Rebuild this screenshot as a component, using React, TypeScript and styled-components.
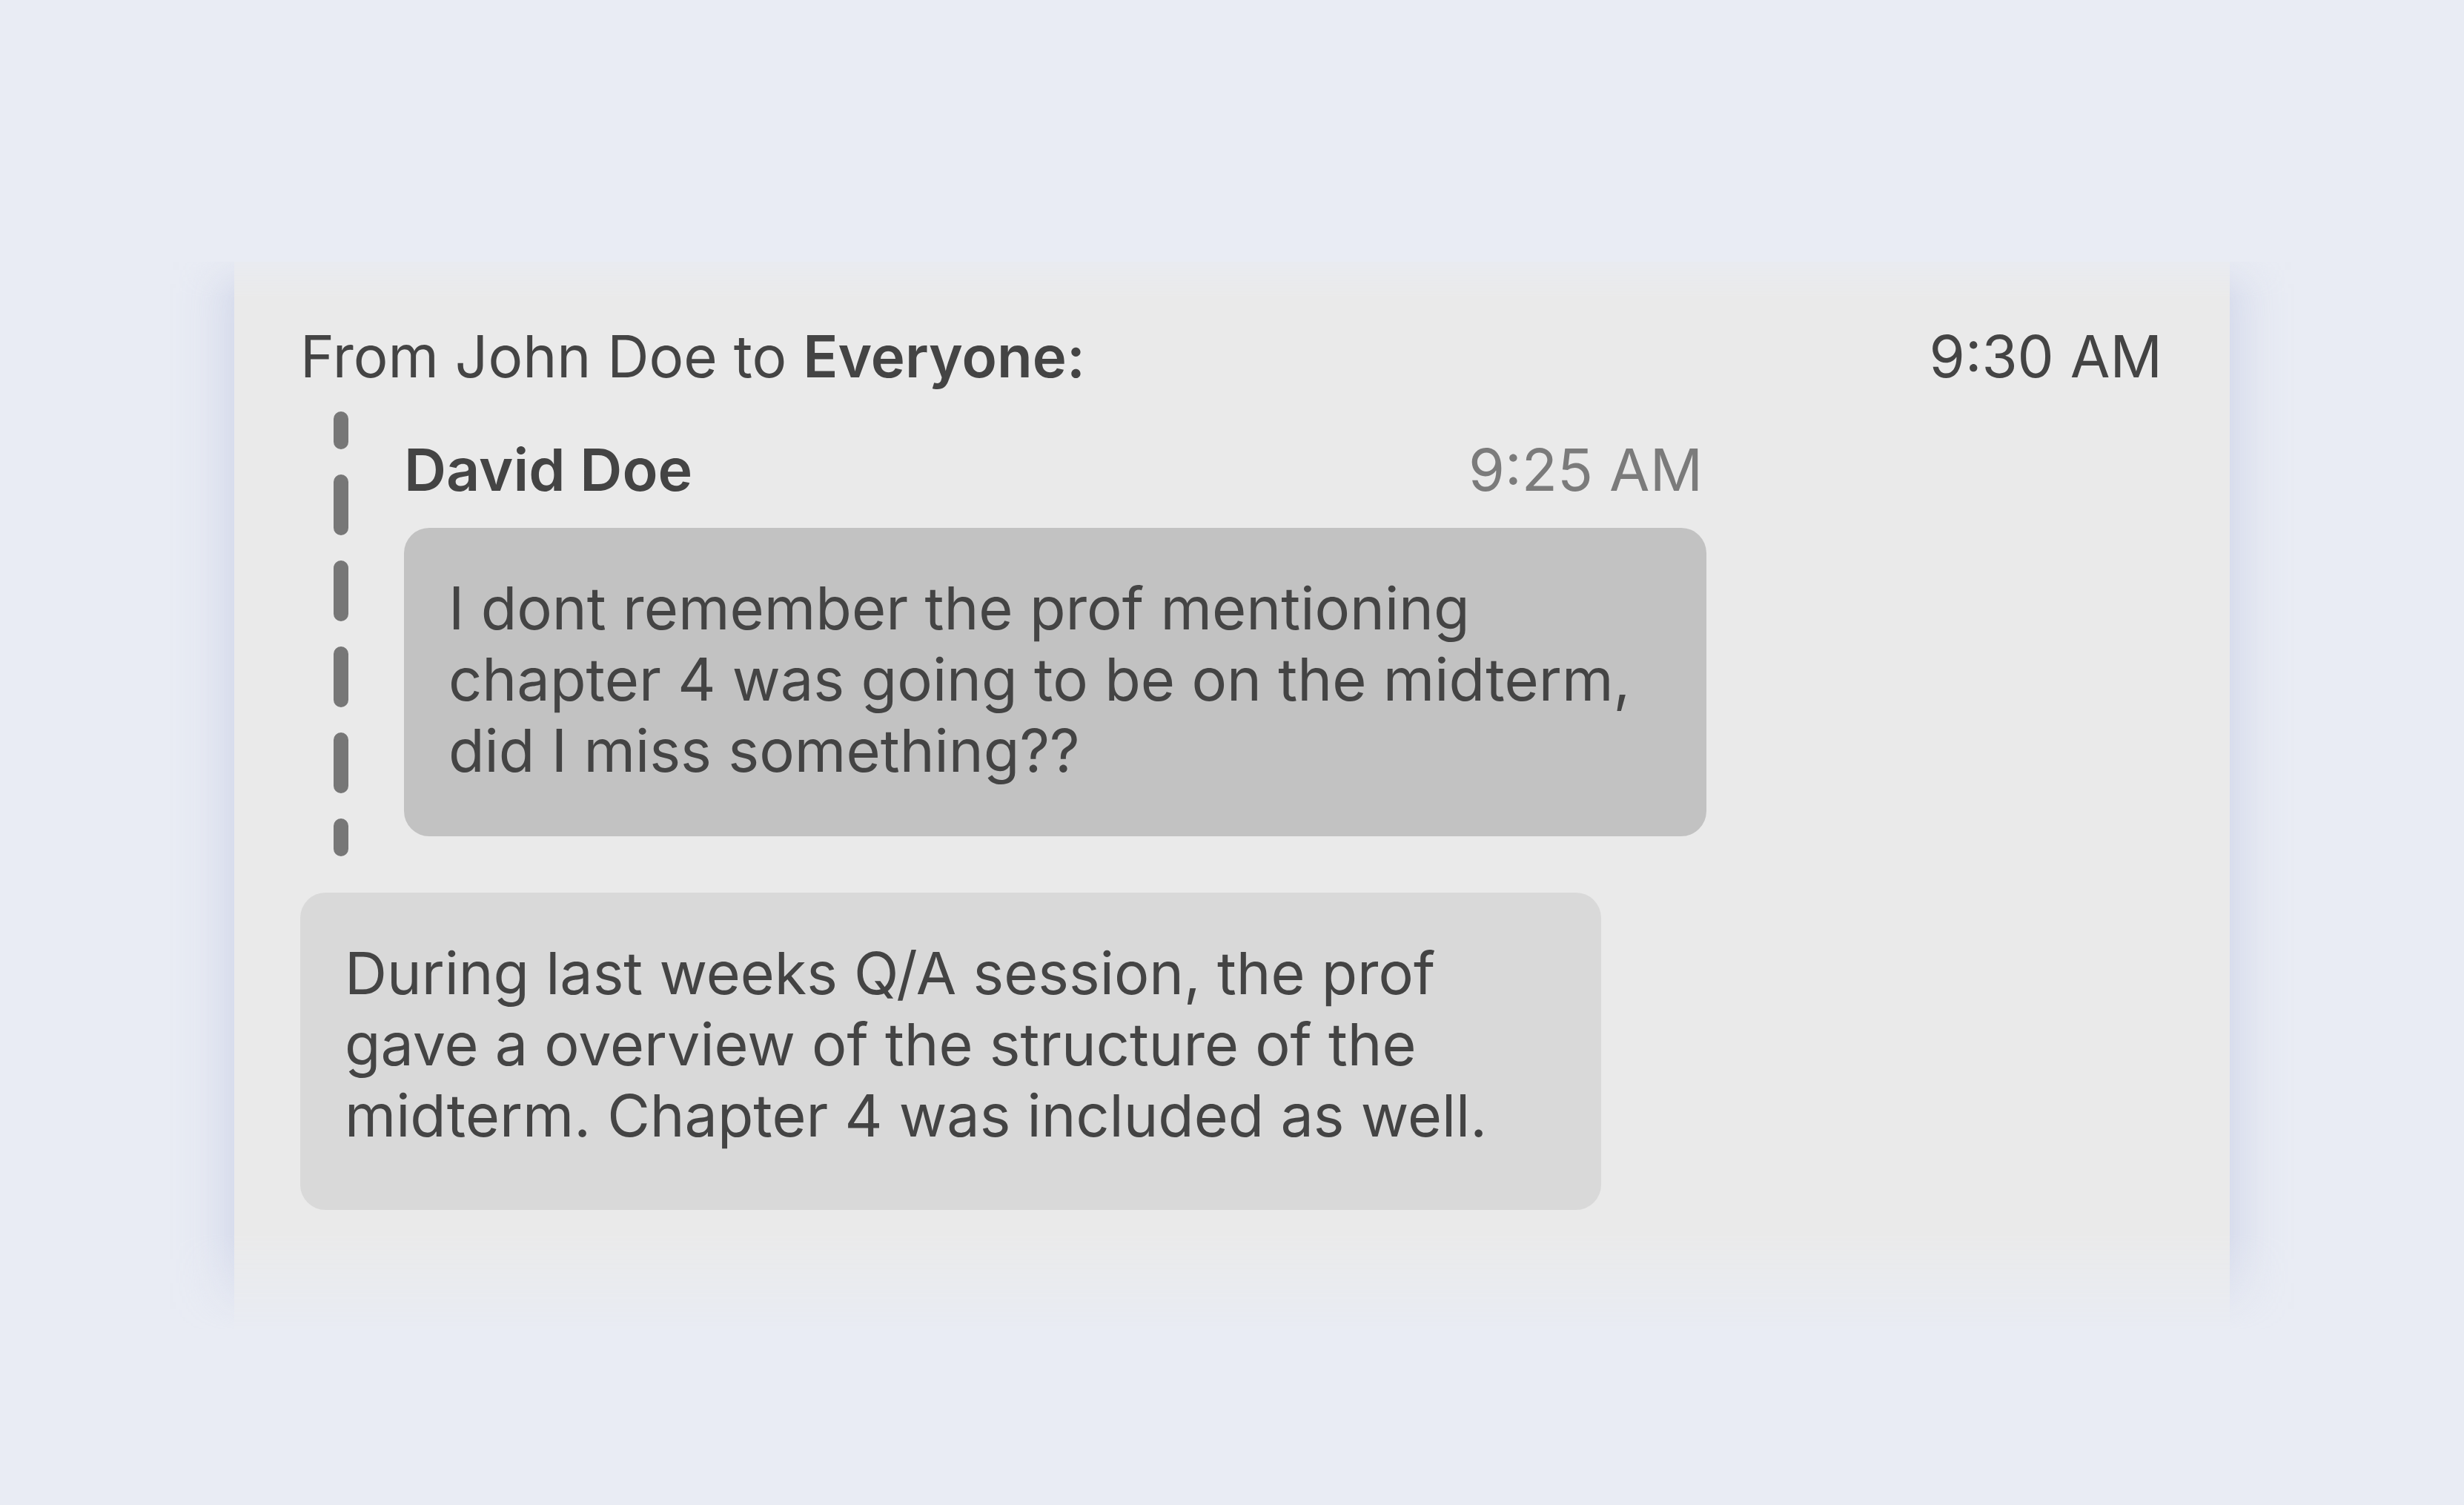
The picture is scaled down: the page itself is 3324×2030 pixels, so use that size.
import React from "react";
import styled, { createGlobalStyle } from "styled-components";

const GlobalStyle = createGlobalStyle`
  html, body {
    margin: 0;
    padding: 0;
    background: #e9ecf4;
  }
  body {
    font-family: Inter, "Noto Sans", "Liberation Sans", sans-serif;
    color: #444444;
  }
  * { box-sizing: border-box; }
`;

const Page = styled.main`
  min-height: 100vh;
  display: flex;
  justify-content: center;
  align-items: flex-start;
  padding-top: 353px;
`;

const Fade = styled.div`
  padding: 0 160px;
  -webkit-mask-image: linear-gradient(
    to bottom,
    rgba(0, 0, 0, 0.35) 0,
    #000 48px,
    #000 calc(100% - 128px),
    rgba(0, 0, 0, 0.05) 100%
  );
  mask-image: linear-gradient(
    to bottom,
    rgba(0, 0, 0, 0.35) 0,
    #000 48px,
    #000 calc(100% - 128px),
    rgba(0, 0, 0, 0.05) 100%
  );
`;

const Card = styled.section`
  width: 2692px;
  background: #eaeaea;
  padding: 80px 91px 160px 89px;
  box-shadow: 0 0 72px 0 rgba(188, 196, 224, 0.75);
  display: flex;
  flex-direction: column;
  align-items: flex-start;
`;

const HeaderRow = styled.header`
  width: 100%;
  display: flex;
  justify-content: space-between;
  align-items: baseline;
  font-size: 78px;
  line-height: 95px;
  color: #444444;
`;

const Strong = styled.strong`
  font-weight: 600;
`;

const Quote = styled.div`
  display: flex;
  margin-top: 27px;
  padding-left: 45px;
`;

const DashRail = styled.svg`
  width: 20px;
  height: 600px;
  flex: none;
  display: block;
`;

const QuoteBody = styled.div`
  display: flex;
  flex-direction: column;
  margin-left: 75px;
  padding-top: 31px;
  width: 1757px;
`;

const NameRow = styled.div`
  display: flex;
  justify-content: space-between;
  align-items: baseline;
  font-size: 79px;
  line-height: 95px;
  padding-right: 5px;
`;

const Name = styled.span`
  font-weight: 600;
  color: #444444;
`;

const Time = styled.span<{ $muted?: boolean }>`
  color: ${(p) => (p.$muted ? "#7b7b7b" : "#444444")};
  font-weight: 400;
`;

const Bubble = styled.div<{ $tone: "quoted" | "reply" }>`
  font-size: ${(p) => (p.$tone === "quoted" ? "79.4px" : "79px")};
  line-height: 96px;
  color: #444444;
  border-radius: 34px;
  background: ${(p) => (p.$tone === "quoted" ? "#c2c2c2" : "#d9d9d9")};
  padding: ${(p) => (p.$tone === "quoted" ? "60px 60px 68px" : "60px 60px 80px")};
  width: ${(p) => (p.$tone === "quoted" ? "1757px" : "1755px")};
  margin-top: ${(p) => (p.$tone === "quoted" ? "31px" : "49px")};
`;

export default function App() {
  return (
    <>
      <GlobalStyle />
      <Page>
        <Fade>
          <Card>
            <HeaderRow>
              <span>
                From John Doe to <Strong>Everyone:</Strong>
              </span>
              <Time>9:30 AM</Time>
            </HeaderRow>

            <Quote>
              <DashRail viewBox="0 0 20 600" aria-hidden="true">
                <line
                  x1="10"
                  y1="10"
                  x2="10"
                  y2="590"
                  stroke="#777777"
                  strokeWidth="20"
                  strokeLinecap="round"
                  strokeDasharray="62 54"
                  strokeDashoffset="31"
                />
              </DashRail>
              <QuoteBody>
                <NameRow>
                  <Name>David Doe</Name>
                  <Time $muted>9:25 AM</Time>
                </NameRow>
                <Bubble $tone="quoted">
                  I dont remember the prof mentioning chapter 4 was going to be on the midterm, did I miss something??
                </Bubble>
              </QuoteBody>
            </Quote>

            <Bubble $tone="reply">
              During last weeks Q/A session, the prof gave a overview of the structure of the midterm. Chapter 4 was included as well.
            </Bubble>
          </Card>
        </Fade>
      </Page>
    </>
  );
}
